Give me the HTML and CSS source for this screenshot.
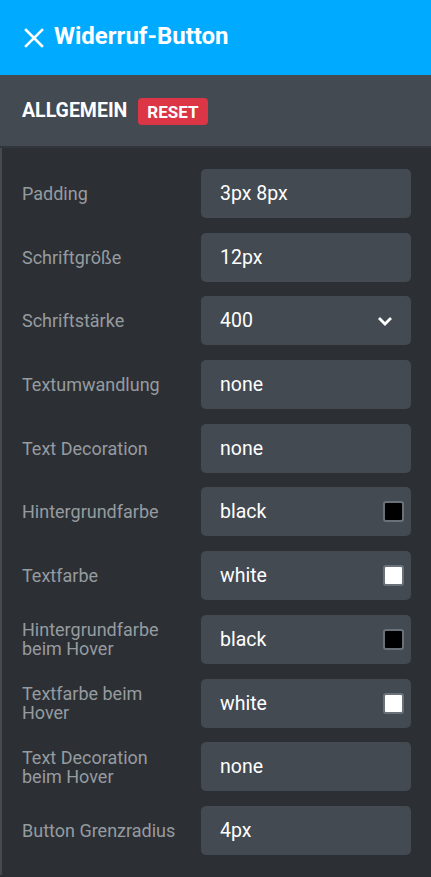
FILE: index.html
```html
<!DOCTYPE html>
<html>
<head>
    <link rel="stylesheet" href="styles.css">
</head>
<body>
    <header class="topbar">
        <svg class="close" width="20" height="20" viewBox="0 0 20 20">
            <path d="M2 2 L18 18 M18 2 L2 18" stroke="#fff" stroke-width="2.6" stroke-linecap="square" fill="none"/>
        </svg>
        <span class="title">Widerruf-Button</span>
    </header>

    <div class="section">
        <span class="section-name">ALLGEMEIN</span>
        <span class="reset">RESET</span>
    </div>

    <div class="fields">
        <div class="row">
            <div class="label">Padding</div>
            <div class="input">3px 8px</div>
        </div>
        <div class="row">
            <div class="label">Schriftgröße</div>
            <div class="input">12px</div>
        </div>
        <div class="row">
            <div class="label">Schriftstärke</div>
            <div class="input">400
                <svg class="chevron" width="16" height="10" viewBox="0 0 16 10">
                    <path d="M2 2 L8 8 L14 2" stroke="#fff" stroke-width="2.8" fill="none"/>
                </svg>
            </div>
        </div>
        <div class="row">
            <div class="label">Textumwandlung</div>
            <div class="input">none</div>
        </div>
        <div class="row">
            <div class="label">Text Decoration</div>
            <div class="input">none</div>
        </div>
        <div class="row">
            <div class="label">Hintergrundfarbe</div>
            <div class="input">black <span class="swatch black"></span></div>
        </div>
        <div class="row">
            <div class="label">Textfarbe</div>
            <div class="input">white <span class="swatch white"></span></div>
        </div>
        <div class="row">
            <div class="label">Hintergrundfarbe beim Hover</div>
            <div class="input">black <span class="swatch black"></span></div>
        </div>
        <div class="row">
            <div class="label">Textfarbe beim Hover</div>
            <div class="input">white <span class="swatch white"></span></div>
        </div>
        <div class="row">
            <div class="label">Text Decoration beim Hover</div>
            <div class="input">none</div>
        </div>
        <div class="row">
            <div class="label">Button Grenzradius</div>
            <div class="input">4px</div>
        </div>
    </div>
</body>
</html>
```

FILE: styles.css
```css
body {
    margin: 0;
    padding: 0;
    background-color: #2c3034;
    font-family: Roboto, 'Liberation Sans', sans-serif;
    color: #fff;
}
.topbar {
    height: 75px;
    background-color: #00aaff;
    display: flex;
    align-items: center;
    padding: 0 24px;
    gap: 10px;
}
.close {
    flex-shrink: 0;
}
.title {
    font-size: 24px;
    font-weight: bold;
    margin-top: -4px;
}
.section {
    height: 71px;
    background-color: #434a52;
    border-bottom: 2px solid #32363b;
    display: flex;
    align-items: center;
    padding: 0 22px;
    gap: 11px;
}
.section-name {
    font-size: 19.5px;
    font-weight: bold;
}
.reset {
    background-color: #dc3545;
    border-radius: 4px;
    font-size: 17px;
    font-weight: bold;
    padding: 4px 9px 3px;
    margin-top: 1px;
}
.fields {
    border-left: 2px solid #434a52;
    padding: 21px 20px 20px 20px;
    display: flex;
    flex-direction: column;
    gap: 14.7px;
}
.row {
    display: flex;
    align-items: center;
    gap: 19px;
}
.label {
    width: 160px;
    flex-shrink: 0;
    font-size: 18px;
    line-height: 19px;
    color: #969ba0;
}
.input {
    flex: 1;
    height: 49px;
    background-color: #434a52;
    border-radius: 5px;
    display: flex;
    align-items: center;
    justify-content: space-between;
    padding: 0 7px 0 19px;
    font-size: 19.5px;
}
.chevron {
    margin-right: 11px;
}
.swatch {
    width: 17px;
    height: 17px;
    border: 2px solid #6a717a;
    border-radius: 3px;
}
.black {
    background-color: #000;
}
.white {
    background-color: #fff;
}
```
